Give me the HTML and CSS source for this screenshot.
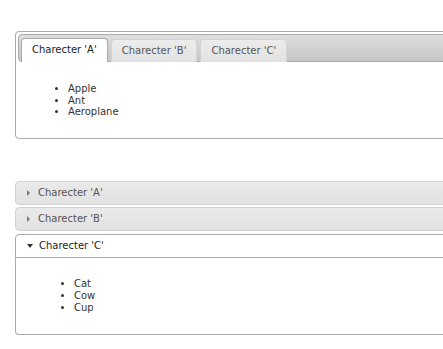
FILE: index.html
```html
<!DOCTYPE html>
<html lang="en">
<head>
    <meta charset="UTF-8">
    <title>Tabs and Accordion</title>
    <link rel="stylesheet" href="styles.css">
</head>
<body>
    <div class="page">
        <div class="tabs">
            <ul class="tab-nav">
                <li class="tab active">Charecter 'A'</li>
                <li class="tab">Charecter 'B'</li>
                <li class="tab">Charecter 'C'</li>
            </ul>
            <div class="tab-panel">
                <ul class="items">
                    <li>Apple</li>
                    <li>Ant</li>
                    <li>Aeroplane</li>
                </ul>
            </div>
        </div>

        <div class="accordion">
            <h3 class="acc-header"><span class="arrow"></span>Charecter 'A'</h3>
            <h3 class="acc-header"><span class="arrow"></span>Charecter 'B'</h3>
            <h3 class="acc-header open"><span class="arrow"></span>Charecter 'C'</h3>
            <div class="acc-content">
                <ul class="items">
                    <li>Cat</li>
                    <li>Cow</li>
                    <li>Cup</li>
                </ul>
            </div>
        </div>
    </div>
</body>
</html>
```

FILE: styles.css
```css
html, body {
    margin: 0;
    overflow: hidden;
}

body {
    font-family: "DejaVu Sans", Verdana, sans-serif;
    font-size: 10px;
    color: #333;
    background: #fff;
}

.page {
    padding: 31px 0 0 15px;
    width: 520px;
}

/* tabs */
.tabs {
    border: 1px solid #aaa;
    border-radius: 4px;
    padding: 2px;
    background: #fff;
}

.tab-nav {
    list-style: none;
    margin: 0;
    padding: 3px 2px 0;
    display: flex;
    gap: 3px;
    border: 1px solid #aaa;
    border-radius: 4px;
    background: linear-gradient(#dedede, #c6c6c6);
    height: 23px;
    align-items: flex-end;
}

.tab {
    padding: 5px 10px;
    border: 1px solid #d3d3d3;
    border-bottom: 0;
    border-radius: 4px 4px 0 0;
    background: linear-gradient(#ececec, #e2e2e2);
    color: #555;
    line-height: 12px;
    margin-bottom: -1px;
}

.tab.active {
    background: #fff;
    border-color: #aaa;
    color: #222;
    padding-bottom: 6px;
}

.tab-panel {
    padding: 11px 14px 8px;
}

.items {
    margin: 10px 0;
    padding-left: 36px;
    line-height: 11.5px;
}

/* accordion */
.accordion {
    margin-top: 42px;
}

.acc-header {
    margin: 2px 0 0;
    font-size: 10px;
    font-weight: normal;
    line-height: 12px;
    padding: 5px 8px 5px 11px;
    border: 1px solid #d3d3d3;
    border-radius: 4px;
    background: linear-gradient(#eaeaea, #e2e2e2);
    color: #555;
    display: flex;
    align-items: center;
}

.acc-header:first-child {
    margin-top: 0;
}

.arrow {
    width: 0;
    height: 0;
    border-top: 3px solid transparent;
    border-bottom: 3px solid transparent;
    border-left: 3px solid #777;
    margin-right: 8px;
}

.acc-header.open {
    background: #fff;
    border-color: #aaa;
    border-radius: 4px 4px 0 0;
    color: #222;
    margin-top: 3px;
}

.acc-header.open .arrow {
    border-left: 3px solid transparent;
    border-right: 3px solid transparent;
    border-top: 4px solid #333;
    border-bottom: 0;
    margin-right: 6px;
}

.acc-content {
    border: 1px solid #aaa;
    border-top: 0;
    border-radius: 0 0 4px 4px;
    padding: 10px 22px;
}

.acc-content .items {
    padding-left: 36px;
    line-height: 12px;
}
```
